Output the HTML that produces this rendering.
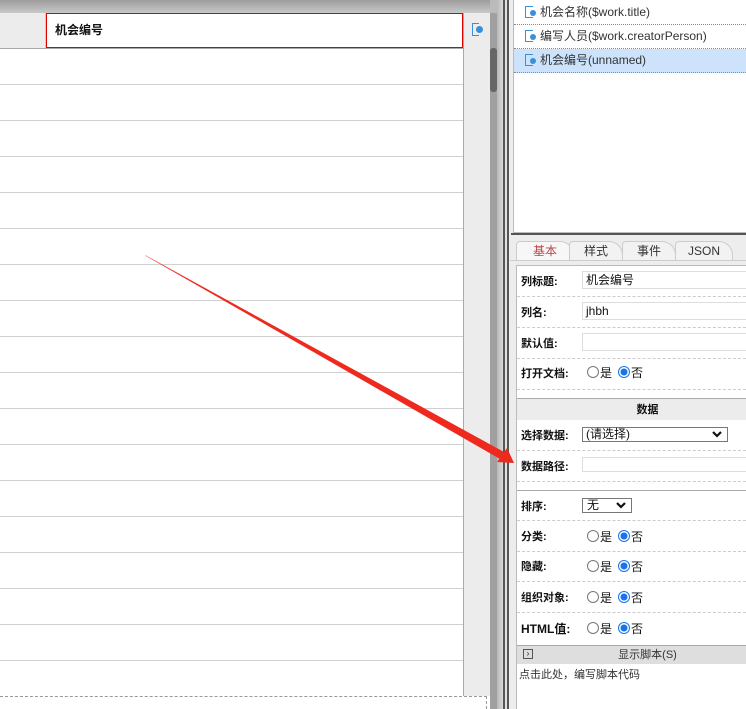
<!DOCTYPE html>
<html><head><meta charset="utf-8"><style>
*{box-sizing:border-box;margin:0;padding:0}
body{width:746px;height:709px;overflow:hidden;background:#fff;position:relative;font-family:"Liberation Sans","Noto Sans CJK SC",sans-serif;font-size:12px;color:#111}
.a{position:absolute}
.rowline{position:absolute;left:0;width:463px;height:1px;background:#cfcfcf}
.lbl{position:absolute;left:521px;font-weight:bold;font-size:11px}
.inp{position:absolute;left:582px;width:170px;height:18px;border:1px solid #ddd;background:#fff;font-size:12px;padding-left:3px;line-height:16px}
.dash{position:absolute;left:517px;width:229px;border-top:1px dashed #ccc}
.radio{position:absolute;font-size:12px;white-space:nowrap}
.r{display:inline-block;width:12px;height:12px;border-radius:50%;border:1px solid #777;vertical-align:-1px;background:#fff;margin-right:1px}
.rc{border:1px solid #1a73e8;background:radial-gradient(circle,#1a73e8 0 3.2px,#fff 3.8px);margin-left:6px}
.item{position:absolute;left:514px;width:232px;height:24px;border-bottom:1px dotted #888;font-size:12px;color:#333;line-height:23px;padding-left:26px}
.ic{position:absolute;left:11px;top:5px;width:8px;height:12px;border:1.5px solid #3b8fd6;border-right:none}
.ic:after{content:"";position:absolute;left:4px;top:3px;width:6px;height:6px;border-radius:50%;background:#3b8fd6}
.tab{position:absolute;top:241px;height:20px;border:1px solid #ccc;border-bottom:none;border-radius:4px 14px 0 0;background:#f2f2f2;font-size:12px;text-align:center;line-height:19px;color:#333}
.chev{position:absolute;right:5px;top:3px}
</style></head><body>
<div class="a" style="left:0;top:0;width:490px;height:13px;background:linear-gradient(#9c9c9c,#c9c9c9)"></div>
<div class="a" style="left:0;top:13px;width:46px;height:35px;background:#ececec;border-right:1px solid #ccc"></div>
<div class="a" style="left:46px;top:13px;width:417px;height:35px;border:1px solid #e00000;background:#fff;font-weight:bold;font-size:12px;line-height:33px;padding-left:8px">机会编号</div>
<div class="a" style="left:463px;top:13px;width:27px;height:683px;background:#ececec;border-left:1px solid #aaa"></div>
<div class="a" style="left:472px;top:23px;width:7px;height:13px;border:1.5px solid #3b8fd6;border-right:none"></div>
<div class="a" style="left:476px;top:26px;width:7px;height:7px;border-radius:50%;background:#3b8fd6"></div>
<div class="a" style="left:0;top:48px;width:463px;height:1px;background:#aaa"></div>
<div class="rowline" style="top:84px"></div><div class="rowline" style="top:120px"></div><div class="rowline" style="top:156px"></div><div class="rowline" style="top:192px"></div><div class="rowline" style="top:228px"></div><div class="rowline" style="top:264px"></div><div class="rowline" style="top:300px"></div><div class="rowline" style="top:336px"></div><div class="rowline" style="top:372px"></div><div class="rowline" style="top:408px"></div><div class="rowline" style="top:444px"></div><div class="rowline" style="top:480px"></div><div class="rowline" style="top:516px"></div><div class="rowline" style="top:552px"></div><div class="rowline" style="top:588px"></div><div class="rowline" style="top:624px"></div><div class="rowline" style="top:660px"></div>
<div class="a" style="left:0;top:696px;width:487px;height:13px;border-top:1px dashed #999;border-right:1px dashed #999"></div>
<div class="a" style="left:490px;top:13px;width:7px;height:696px;background:#a0a0a0"></div>
<div class="a" style="left:490px;top:48px;width:7px;height:44px;background:#666;border-radius:3px"></div>
<div class="a" style="left:490px;top:0;width:7px;height:13px;background:#bbb"></div>
<div class="a" style="left:497px;top:0;width:6px;height:709px;background:linear-gradient(90deg,#b8b8b8,#d8d8d8)"></div>
<div class="a" style="left:503px;top:0;width:2px;height:709px;background:#555"></div>
<div class="a" style="left:505px;top:0;width:2px;height:709px;background:#e0e0e0"></div>
<div class="a" style="left:507px;top:0;width:2px;height:709px;background:#555"></div>
<div class="a" style="left:509px;top:0;width:237px;height:709px;background:#ededed"></div>
<div class="a" style="left:513px;top:0;width:233px;height:233px;background:#fff;border:1px solid #bbb;border-top:none;border-right:none"></div>
<div class="item" style="top:1px"><span class="ic"></span>机会名称($work.title)</div>
<div class="item" style="top:25px"><span class="ic"></span>编写人员($work.creatorPerson)</div>
<div class="item" style="top:49px;background:#cce3fb"><span class="ic"></span>机会编号(unnamed)</div>
<div class="a" style="left:511px;top:233px;width:235px;height:2px;background:#555"></div>
<div class="tab" style="left:516px;width:58px;color:#b44;background:#f7f7f7">基本</div>
<div class="tab" style="left:569px;width:54px">样式</div>
<div class="tab" style="left:622px;width:54px">事件</div>
<div class="tab" style="left:675px;width:58px">JSON</div>
<div class="a" style="left:510px;top:260px;width:236px;height:1px;background:#ccc"></div>
<div class="a" style="left:516px;top:265px;width:230px;height:444px;background:#fff;border-left:1px solid #bbb;border-top:1px solid #bbb"></div>
<div class="lbl" style="top:273px">列标题:</div><div class="inp" style="top:271px">机会编号</div>
<div class="dash" style="top:296px"></div>
<div class="lbl" style="top:304px">列名:</div><div class="inp" style="top:302px">jhbh</div>
<div class="dash" style="top:327px"></div>
<div class="lbl" style="top:335px">默认值:</div><div class="inp" style="top:333px"></div>
<div class="dash" style="top:358px"></div>
<div class="lbl" style="top:365px">打开文档:</div><div class="radio" style="left:587px;top:364px"><span class="r"></span>是<span class="r rc"></span>否</div>
<div class="dash" style="top:389px"></div>
<div class="a" style="left:517px;top:398px;width:229px;height:22px;background:#ececec;border-top:1px solid #aaa;font-weight:bold;font-size:11px;text-align:center;line-height:22px;padding-left:32px">数据</div>
<div class="lbl" style="top:427px">选择数据:</div>
<div class="a" style="left:582px;top:427px;width:146px;height:15px;border:1px solid #777;font-size:12px;line-height:13px;padding-left:3px">(请选择)<svg class="chev" width="10" height="7"><path d="M1 1L5 5L9 1" stroke="#111" stroke-width="2.2" fill="none"/></svg></div>
<div class="dash" style="top:450px"></div>
<div class="lbl" style="top:458px">数据路径:</div><div class="inp" style="top:457px;height:15px"></div>
<div class="dash" style="top:481px"></div>
<div class="a" style="left:517px;top:490px;width:229px;height:1px;background:#aaa"></div>
<div class="lbl" style="top:498px">排序:</div>
<div class="a" style="left:582px;top:498px;width:50px;height:15px;border:1px solid #777;font-size:12px;line-height:13px;padding-left:4px">无<svg class="chev" width="10" height="7"><path d="M1 1L5 5L9 1" stroke="#111" stroke-width="2.2" fill="none"/></svg></div>
<div class="dash" style="top:520px"></div>
<div class="lbl" style="top:528px">分类:</div><div class="radio" style="left:587px;top:528px"><span class="r"></span>是<span class="r rc"></span>否</div>
<div class="dash" style="top:551px"></div>
<div class="lbl" style="top:558px">隐藏:</div><div class="radio" style="left:587px;top:558px"><span class="r"></span>是<span class="r rc"></span>否</div>
<div class="dash" style="top:581px"></div>
<div class="lbl" style="top:589px">组织对象:</div><div class="radio" style="left:587px;top:589px"><span class="r"></span>是<span class="r rc"></span>否</div>
<div class="dash" style="top:612px"></div>
<div class="lbl" style="top:620px;font-size:12px">HTML值:</div><div class="radio" style="left:587px;top:620px"><span class="r"></span>是<span class="r rc"></span>否</div>
<div class="a" style="left:517px;top:645px;width:229px;height:19px;background:#dedede;border-top:1px solid #aaa;font-size:11px;text-align:center;line-height:18px;color:#333;padding-left:32px">显示脚本(S)</div>
<div class="a" style="left:523px;top:649px;width:10px;height:10px;border:1px solid #555;font-size:8px;line-height:8px;text-align:center">›</div>
<div class="a" style="left:519px;top:666px;font-size:11px;color:#333">点击此处，编写脚本代码</div>
<svg class="a" style="left:0;top:0" width="746" height="709"><polygon points="145,255 504,452 500,459 146,256" fill="#ee2a1e"/><polygon points="507,448 514,463 497,462" fill="#ee2a1e"/></svg>
</body></html>
